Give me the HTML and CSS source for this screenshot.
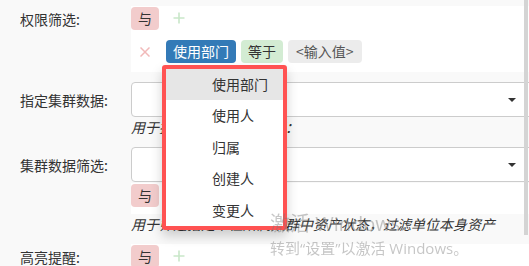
FILE: index.html
```html
<!DOCTYPE html>
<html lang="zh-CN">
<head>
    <meta charset="UTF-8">
    <meta name="viewport" content="width=device-width, initial-scale=1.0">
    <title>数据筛选设置</title>
    <link rel="stylesheet" href="styles.css">
</head>
<body>
    <div class="form">

        <!-- 权限筛选 -->
        <div class="row">
            <label class="row-label label-filter">权限筛选:</label>
            <div class="row-body">
                <div class="filter filter-main">
                    <div class="filter-line">
                        <span class="tag tag-and">与</span>
                        <span class="add-btn">
                            <svg width="12" height="12" viewBox="0 0 12 12"><path d="M6 0.5v11M0.5 6h11" stroke="#c9e7c9" stroke-width="1.6" fill="none"/></svg>
                        </span>
                    </div>
                    <div class="filter-line">
                        <span class="remove-btn">
                            <svg width="10" height="10" viewBox="0 0 10 10"><path d="M0.5 0.5l9 9M9.5 0.5l-9 9" stroke="#f1b9b9" stroke-width="1.5" fill="none"/></svg>
                        </span>
                        <span class="field-pick">
                            <span class="tag tag-field">使用部门</span>
                            <!-- 下拉菜单 -->
                            <ul class="dropdown">
                                <li class="active">使用部门</li>
                                <li>使用人</li>
                                <li>归属</li>
                                <li>创建人</li>
                                <li>变更人</li>
                            </ul>
                        </span>
                        <span class="tag tag-op">等于</span>
                        <span class="tag tag-value">&lt;输入值&gt;</span>
                    </div>
                </div>
            </div>
        </div>

        <!-- 指定集群数据 -->
        <div class="row">
            <label class="row-label label-select">指定集群数据:</label>
            <div class="row-body">
                <div class="select"><span class="caret"></span></div>
                <p class="help">用于指定需要查询的数据：</p>
            </div>
        </div>

        <!-- 集群数据筛选 -->
        <div class="row">
            <label class="row-label label-select">集群数据筛选:</label>
            <div class="row-body">
                <div class="select"><span class="caret"></span></div>
                <div class="filter filter-sub">
                    <div class="filter-line">
                        <span class="tag tag-and">与</span>
                    </div>
                </div>
                <p class="help">用于筛选指定单位所属集群中资产状态，过滤单位本身资产</p>
            </div>
        </div>

        <!-- 高亮提醒 -->
        <div class="row">
            <label class="row-label label-filter">高亮提醒:</label>
            <div class="row-body">
                <div class="filter">
                    <div class="filter-line">
                        <span class="tag tag-and">与</span>
                        <span class="add-btn">
                            <svg width="12" height="12" viewBox="0 0 12 12"><path d="M6 0.5v11M0.5 6h11" stroke="#c9e7c9" stroke-width="1.6" fill="none"/></svg>
                        </span>
                    </div>
                </div>
            </div>
        </div>
    </div>

    <div class="scrollbar"></div>

    <div class="watermark">
        <div class="wm-title">激活 Windows</div>
        <div class="wm-sub">转到“设置”以激活 Windows。</div>
    </div>
</body>
</html>
```

FILE: styles.css
```css
html, body {
    margin: 0;
    padding: 0;
    overflow: hidden;
}

body {
    font-family: "Noto Sans CJK SC", "Noto Sans", sans-serif;
    font-size: 14px;
    color: #333;
    background-color: #f9f9f9;
    width: 529px;
    height: 266px;
}

.form {
    width: 534px;
    padding-top: 6px;
    display: flex;
    flex-direction: column;
    gap: 10px;
}

.row {
    display: flex;
}

.row-label {
    width: 111px;
    flex: none;
    padding-left: 20px;
    line-height: 20px;
}

.label-filter {
    padding-top: 3px;
}

.label-select {
    padding-top: 8px;
}

.row-body {
    flex: 1;
    min-width: 0;
}

/* filter widget */
.filter {
    background-color: #fff;
    padding: 1px 0 1px 0;
    display: flex;
    flex-direction: column;
    gap: 10px;
}

.filter-main {
    padding-bottom: 9px;
}

.filter-sub {
    margin-top: 1px;
    padding-bottom: 7px;
}

.filter-line {
    display: flex;
    align-items: center;
    height: 23px;
}

.tag {
    display: inline-block;
    height: 23px;
    line-height: 23px;
    padding: 0 7px;
    border-radius: 4px;
    white-space: nowrap;
}

.tag-and {
    background-color: #f2cccc;
    padding: 0 7px;
}

.tag-field {
    background-color: #337ab7;
    color: #fff;
}

.tag-op {
    background-color: #d3ecd3;
    margin-left: 5px;
}

.tag-value {
    background-color: #ececec;
    color: #555;
    margin-left: 5px;
    padding: 0 8px;
}

.add-btn {
    display: flex;
    margin-left: 14px;
    margin-top: -2px;
}

.remove-btn {
    display: flex;
    margin-left: 9px;
    margin-right: 16px;
}

.field-pick {
    position: relative;
    display: inline-block;
}

/* dropdown menu */
.dropdown {
    position: absolute;
    top: 25px;
    left: -4px;
    z-index: 10;
    width: 117px;
    margin: 0;
    padding: 0;
    list-style: none;
    background-color: #fff;
    border: 4px solid #ff5252;
    border-radius: 3px;
    box-shadow: 0 6px 12px rgba(0, 0, 0, 0.18);
}

.dropdown li {
    height: 31.4px;
    line-height: 31.4px;
    padding-left: 46px;
    color: #333;
    white-space: nowrap;
}

.dropdown li.active {
    background-color: #e6e6e6;
}

/* select */
.select {
    height: 33px;
    border: 1px solid #ccc;
    border-radius: 4px;
    background-color: #fff;
    display: flex;
    align-items: center;
    justify-content: flex-end;
    padding-right: 17px;
}

.caret {
    width: 0;
    height: 0;
    border-top: 4px solid #333;
    border-left: 4px solid transparent;
    border-right: 4px solid transparent;
}

.help {
    margin: 0;
    line-height: 20px;
    font-style: italic;
    color: #333;
    white-space: nowrap;
}

/* page overlays */
.scrollbar {
    position: fixed;
    top: 0;
    left: 524px;
    width: 4px;
    height: 235px;
    background-color: #d4d4d4;
    z-index: 20;
}

.watermark {
    position: fixed;
    left: 270px;
    top: 211px;
    z-index: 30;
    color: rgba(120, 120, 120, 0.42);
    pointer-events: none;
    font-family: "Open Sans", "Noto Sans CJK SC", sans-serif;
    white-space: nowrap;
}

.wm-title {
    font-size: 20px;
    line-height: 26px;
}

.wm-sub {
    font-size: 15px;
    line-height: 22px;
}
```
